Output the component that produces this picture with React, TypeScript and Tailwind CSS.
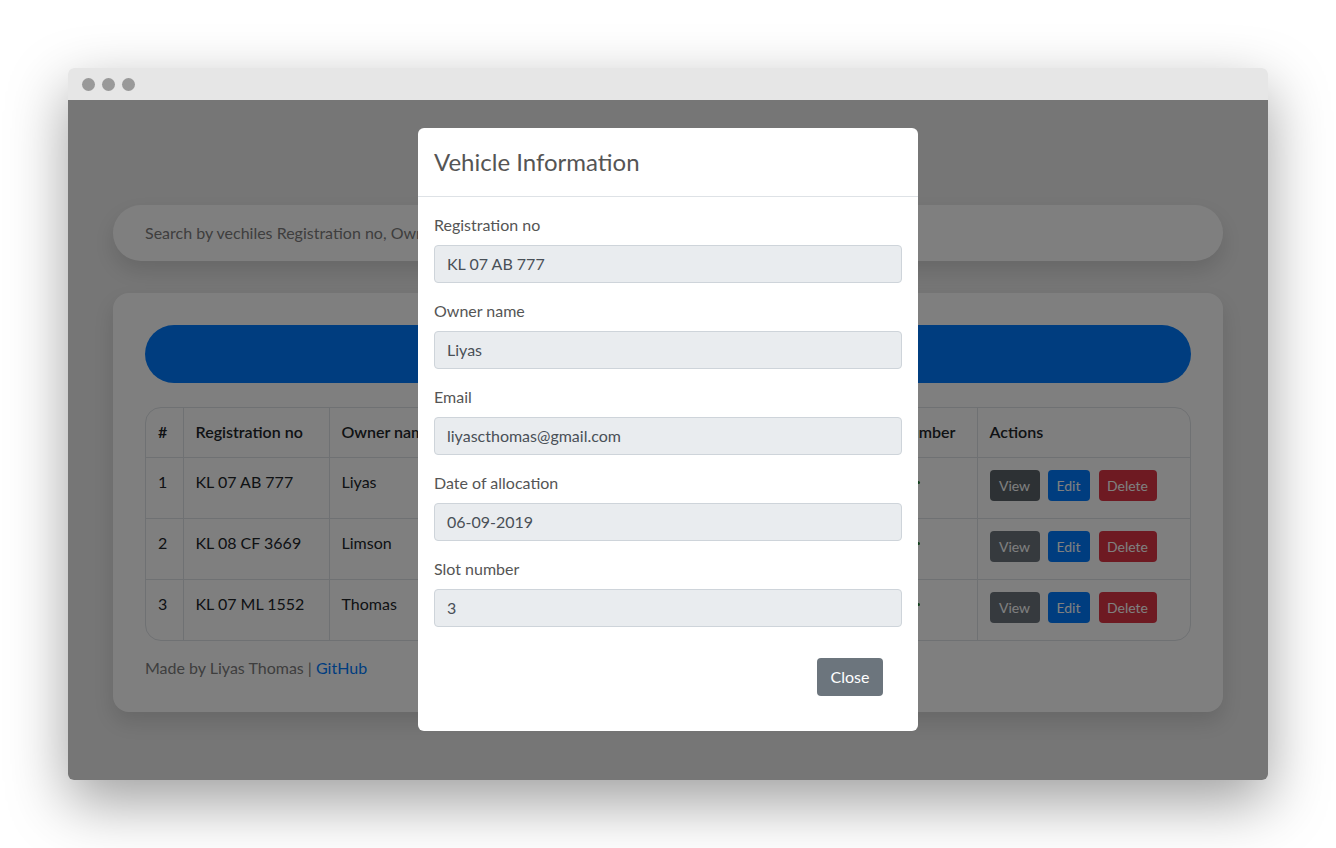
import React from "react";

const rows = [
  { id: 1, reg: "KL 07 AB 777", owner: "Liyas", email: "liyascthomas@gmail.com", date: "06-09-2019", slot: "3" },
  { id: 2, reg: "KL 08 CF 3669", owner: "Limson", email: "limson@gmail.com", date: "07-09-2019", slot: "2" },
  { id: 3, reg: "KL 07 ML 1552", owner: "Thomas", email: "thomas@gmail.com", date: "08-09-2019", slot: "1" },
];

const fields = [
  { label: "Registration no", value: "KL 07 AB 777" },
  { label: "Owner name", value: "Liyas" },
  { label: "Email", value: "liyascthomas@gmail.com" },
  { label: "Date of allocation", value: "06-09-2019" },
  { label: "Slot number", value: "3" },
];

function VehicleModal() {
  return (
    <div className="absolute left-1/2 top-[28px] w-[500px] -translate-x-1/2 rounded-[6px] bg-white">
      {/* Header */}
      <div className="border-b border-[#dee2e6] px-4 py-4">
        <h5 className="text-[24px] leading-[36px] text-[#555]">Vehicle Information</h5>
      </div>

      {/* Body */}
      <div className="px-4 pt-4 pb-[35px]">
        {fields.map((f, i) => (
          <div key={f.label} className={i < fields.length - 1 ? "mb-4" : ""}>
            <label className="mb-2 block text-[16px] leading-6 text-[#555]">{f.label}</label>
            <div className="flex h-[38px] items-center rounded-[4px] border border-[#ced4da] bg-[#e9ecef] px-3 text-[16px] text-[#495057]">
              {f.value}
            </div>
          </div>
        ))}
        <div className="mt-[31px] flex justify-end pr-[19px]">
          <button className="h-[38px] w-[66px] rounded-[4px] bg-[#6c757d] text-[16px] text-white">Close</button>
        </div>
      </div>
    </div>
  );
}

function VehicleTable() {
  return (
    <div className="overflow-hidden rounded-2xl border border-[#dee2e6]">
      <table className="w-full border-collapse text-left text-[16px] text-[#212529]">
        <thead>
          <tr className="h-[49px]">
            <th className="w-[37px] px-3 font-semibold">#</th>
            <th className="w-[146px] border-l border-[#dee2e6] px-3 font-semibold">Registration no</th>
            <th className="w-[130px] border-l border-[#dee2e6] px-3 font-semibold">Owner name</th>
            <th className="w-[230px] border-l border-[#dee2e6] px-3 font-semibold">Email</th>
            <th className="w-[168px] border-l border-[#dee2e6] px-3 font-semibold">Date of allocation</th>
            <th className="w-[120px] border-l border-[#dee2e6] px-3 font-semibold">Slot number</th>
            <th className="border-l border-[#dee2e6] px-3 font-semibold">Actions</th>
          </tr>
        </thead>
        <tbody>
          {rows.map((r, i) => (
            <tr key={r.id} className="h-[61px] border-t border-[#dee2e6] align-top">
              <td className="px-3 pt-3">{r.id}</td>
              <td className="border-l border-[#dee2e6] px-3 pt-3">{r.reg}</td>
              <td className="border-l border-[#dee2e6] px-3 pt-3">{r.owner}</td>
              <td className="border-l border-[#dee2e6] px-3 pt-3">{r.email}</td>
              <td className="border-l border-[#dee2e6] px-3 pt-3">{r.date}</td>
              <td className="border-l border-[#dee2e6] px-3 pt-3">
                <div className="flex items-center">
                  <span className="font-bold text-[#28a745]">{r.slot}</span>
                  <span className="ml-[38px] mt-[1px] h-[3px] w-[3px] rounded-full bg-[#1e7e34]" />
                </div>
              </td>
              <td className="border-l border-[#dee2e6] px-3 pt-3">
                <div className="flex">
                  <button
                    className={`h-[31px] w-[50px] rounded-[4px] text-[14px] text-white ${
                      i === 0 ? "bg-[#5a6268]" : "bg-[#6c757d]"
                    }`}
                  >
                    View
                  </button>
                  <button className="ml-2 h-[31px] w-[42px] rounded-[4px] bg-[#007bff] text-[14px] text-white">
                    Edit
                  </button>
                  <button className="ml-[9px] h-[31px] w-[58px] rounded-[4px] bg-[#dc3545] text-[14px] text-white">
                    Delete
                  </button>
                </div>
              </td>
            </tr>
          ))}
        </tbody>
      </table>
    </div>
  );
}

export default function App() {
  return (
    <div
      className="flex min-h-screen w-full justify-center bg-white pt-[68px]"
      style={{ fontFamily: "Lato, 'Open Sans', 'Noto Sans', sans-serif" }}
    >
      <div className="flex h-[712px] w-[1200px] flex-col overflow-hidden rounded-[6px] shadow-[0_22px_60px_rgba(0,0,0,0.38)]">
        {/* Window title bar */}
        <div className="flex h-8 shrink-0 items-center gap-[7px] bg-[#e6e6e6] pl-[14px]">
          <span className="h-[13px] w-[13px] rounded-full bg-[#999]" />
          <span className="h-[13px] w-[13px] rounded-full bg-[#999]" />
          <span className="h-[13px] w-[13px] rounded-full bg-[#999]" />
        </div>

        {/* Page */}
        <div className="relative flex-1 bg-[#ececec]">
          <div className="mx-auto w-[1110px] pt-[105px]">
            <div className="flex h-[56px] items-center rounded-full bg-white pl-8 text-[16px] text-[#7d7d7d] shadow-[0_10px_20px_rgba(0,0,0,0.12)]">
              Search by vechiles Registration no, Owner name, Email, Date of allocation or Slot number
            </div>

            <div className="mt-8 rounded-2xl bg-white p-8 shadow-[0_10px_20px_rgba(0,0,0,0.12)]">
              <div className="flex h-[58px] items-center justify-center rounded-full bg-[#007bff] text-[20px] text-white">
                Vehicles
              </div>
              <div className="mt-6">
                <VehicleTable />
              </div>
              <p className="mt-[15px] text-[16px] leading-6 text-[#7c7c7c]">
                Made by Liyas Thomas | <span className="text-[#007bff]">GitHub</span>
              </p>
            </div>
          </div>

          {/* Backdrop */}
          <div className="absolute inset-0 bg-black/50" />

          <VehicleModal />
        </div>
      </div>
    </div>
  );
}
